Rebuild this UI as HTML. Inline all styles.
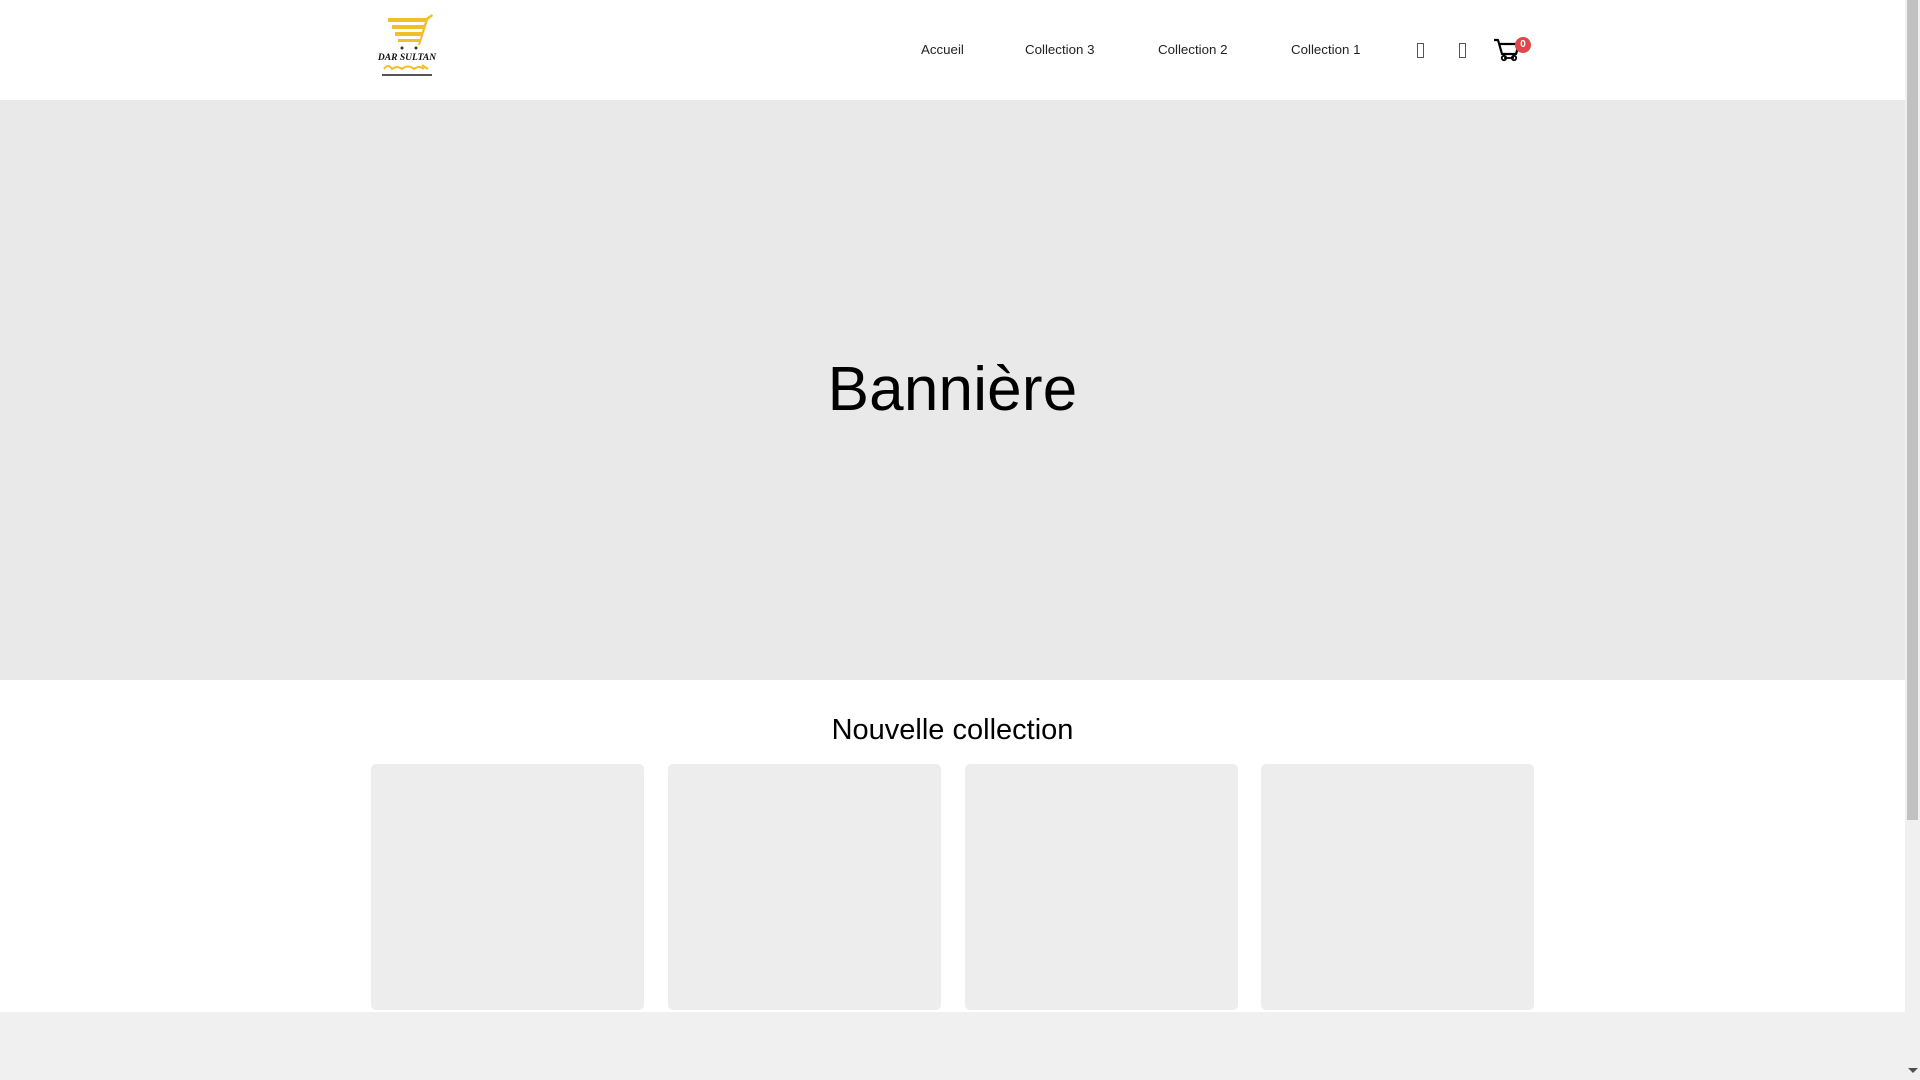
<!DOCTYPE html>
<html><head><meta charset="utf-8"><style>
*{margin:0;padding:0;box-sizing:border-box}
html,body{width:1920px;height:1080px;overflow:hidden;background:#fff;font-family:"Liberation Sans",Arial,sans-serif}
.page{position:absolute;left:0;top:0;width:1905px;height:1080px;background:#fff}
.header{position:absolute;left:0;top:0;width:1905px;height:100px;background:#fff}
.nav a{position:absolute;top:42px;font-size:13.3px;color:#222;text-decoration:none;line-height:16px}
.banner{position:absolute;left:0;top:100px;width:1905px;height:580px;background:#e9e9e9}
.banner h1{position:absolute;left:0;right:0;top:259px;text-align:center;font-weight:400;font-size:62px;color:#000;line-height:62px;letter-spacing:0.2px}
.h2{position:absolute;left:0;width:1905px;top:714px;text-align:center;font-size:29px;color:#000;line-height:32px}
.card{position:absolute;top:764px;width:273px;height:246px;background:#ededed;border-radius:5px}
.band{position:absolute;left:0;top:1012px;width:1905px;height:68px;background:#f0f0f0}
.sb{position:absolute;left:1905px;top:0;width:15px;height:1080px;background:#f0f0f0}
.thumb{position:absolute;left:1907px;top:0;width:11px;height:820px;background:#c1c1c1}
.ib{position:absolute;top:43px;width:7px;height:15px;border:1.5px solid #555;background:#fff}
</style></head><body>
<div class="page">
<div class="header">
<svg style="position:absolute;left:374px;top:13px" width="66" height="66" viewBox="0 0 66 66">
<g fill="#f2bf26">
<rect x="14" y="5" width="38" height="4"/>
<rect x="18" y="12" width="32" height="4"/>
<rect x="21" y="19" width="27" height="4"/>
<rect x="24" y="26" width="22" height="3"/>
<path d="M52 5 L58 1 L59 3 L54 7 L46 32 L44 32Z"/>
</g>
<g fill="#333"><circle cx="28" cy="35" r="1.5"/><circle cx="42" cy="35" r="1.5"/></g>
<text x="33" y="47" text-anchor="middle" font-family="Liberation Serif,serif" font-weight="bold" font-style="italic" font-size="9.5" fill="#111">DAR SULTAN</text>
<path d="M10 56 q4 -6 8 0 q5 -4 10 0 q6 -5 12 0 q5 -4 10 0 M48 52 l6 4" stroke="#f2bf26" stroke-width="2" fill="none"/>
<rect x="8" y="61" width="50" height="2" fill="#555"/>
</svg>
<div class="nav">
<a style="left:921px">Accueil</a>
<a style="left:1025px">Collection 3</a>
<a style="left:1158px">Collection 2</a>
<a style="left:1291px">Collection 1</a>
</div>
<div class="ib" style="left:1417px"></div>
<div class="ib" style="left:1459px"></div>
<svg style="position:absolute;left:1493px;top:37px" width="30" height="26" viewBox="0 0 30 26">
<path d="M1 3 H5 L9 17 H23 L26 7 H7" stroke="#000" stroke-width="2.2" fill="none" stroke-linejoin="round"/>
<circle cx="11" cy="21" r="2.2" stroke="#000" stroke-width="1.8" fill="#fff"/>
<circle cx="21" cy="21" r="2.2" stroke="#000" stroke-width="1.8" fill="#fff"/>
<path d="M11 21 H21" stroke="#000" stroke-width="1.8"/>
</svg>
<div style="position:absolute;left:1515px;top:37px;width:16px;height:16px;border-radius:50%;background:#e0464b;color:#fff;font-size:10px;font-weight:bold;line-height:16px;text-align:center">0</div>
</div>
<div class="banner"><h1>Bannière</h1></div>
<div class="h2">Nouvelle collection</div>
<div class="card" style="left:371px"></div>
<div class="card" style="left:668px"></div>
<div class="card" style="left:965px"></div>
<div class="card" style="left:1261px"></div>
<div class="band"></div>
</div>
<div class="sb"></div><div class="thumb"></div>
<div style="position:absolute;left:1908px;top:1068px;width:0;height:0;border-left:5px solid transparent;border-right:5px solid transparent;border-top:5px solid #505050"></div>
</body></html>
